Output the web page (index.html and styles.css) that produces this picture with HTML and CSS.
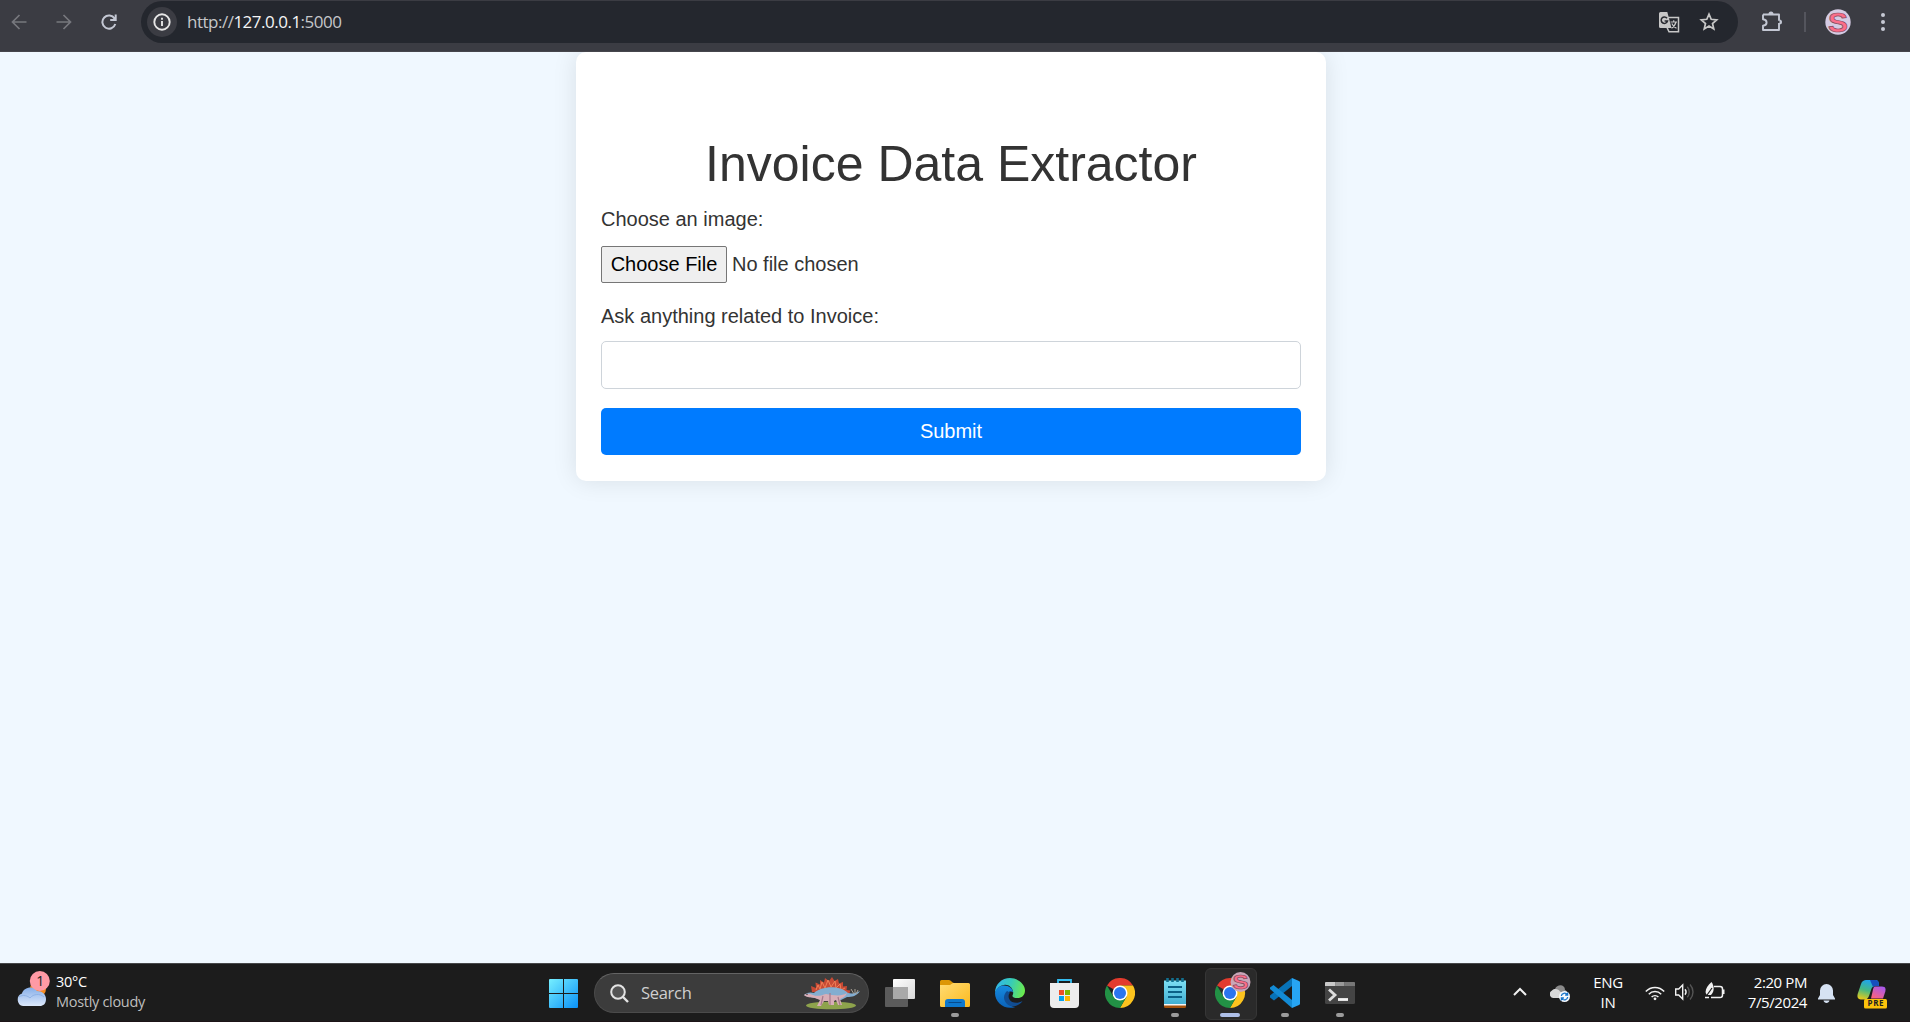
FILE: index.html
```html
<!DOCTYPE html>
<html lang="en">
<head>
<meta charset="utf-8">
<title>Invoice Data Extractor</title>
<link rel="stylesheet" href="styles.css">
</head>
<body>
<header class="toolbar">
  <div class="nav">
    <svg class="dim" width="16" height="16" viewBox="0 0 16 16"><path d="M15.5 8H1.5M8.5 1L1.5 8l7 7" /></svg>
    <svg class="dim fwd" width="16" height="16" viewBox="0 0 16 16"><path d="M.5 8h14M7.500 1l7 7-7 7" /></svg>
    <svg class="reload" width="16" height="16" viewBox="0 0 16 16"><path d="M13.600 4.600A6.600 6.600 0 1 0 14.300 10M14.700 .5v5.500H9.200"/></svg>
  </div>
  <div class="omnibox">
    <span class="site-info"><svg width="18" height="18" viewBox="0 0 18 18"><circle cx="9" cy="9" r="7.700"/><path d="M9 8v5M9 4.800v2"/></svg></span>
    <span class="url">http://<b>127.0.0.1</b>:5000</span>
    <svg class="translate" width="22" height="22" viewBox="0 0 22 22">
      <path d="M9 5.500h10.500v14.300H10L8 15.500" fill="none" stroke="#c7c7c7" stroke-width="1.500"/>
      <path d="M1.500 0h6.800L12.500 16h-11A1.500 1.500 0 0 1 0 14.500v-13A1.500 1.500 0 0 1 1.500 0z" fill="#c7c7c7"/>
      <path d="M8 6.300A3.200 3.200 0 1 0 8.500 9H5.600" fill="none" stroke="#282a30" stroke-width="1.500"/>
      <path d="M11.500 10h6.500M14.700 8.300V10M17 10c-.7 3-2.500 5-4.500 6.200M12.800 11.500c.8 2 2.300 3.500 4.700 4.700" fill="none" stroke="#c7c7c7" stroke-width="1.200"/>
    </svg>
    <svg class="star" width="20" height="20" viewBox="0 0 20 20"><path d="M10 2.200l2.200 5.100 5.500.5-4.200 3.700 1.300 5.500L10 14.100 5.200 17l1.300-5.500-4.200-3.700 5.500-.5z" fill="none" stroke="#c7c7c7" stroke-width="1.700"/></svg>
  </div>
  <svg class="puzzle" width="22" height="22" viewBox="0 0 22 22"><path d="M2 3.500h16v6.200M18 12v7H2v-4.200c4.800-.5 4.800-6.100 0-6.600V3.500" fill="none" stroke="#c3c7d3" stroke-width="1.900" stroke-linejoin="round"/><path d="M7.500 3a2.500 2.500 0 0 1 5 0zM18.500 8.500a2.500 2.500 0 0 1 0 5z" fill="#c3c7d3"/></svg>
  <span class="divider"></span>
  <svg class="avatar" width="26" height="26" viewBox="0 0 26 26"><circle cx="13" cy="13" r="12.700" fill="#d5cbe3"/><text x="13" y="22.500" text-anchor="middle" class="mono-s" textLength="20" lengthAdjust="spacingAndGlyphs">S</text></svg>
  <svg class="dots" width="6" height="20" viewBox="0 0 6 20"><circle cx="3" cy="3" r="2"/><circle cx="3" cy="10" r="2"/><circle cx="3" cy="17" r="2"/></svg>
</header>

<main class="page">
  <form class="card">
    <h1>Invoice Data Extractor</h1>
    <label class="label">Choose an image:</label>
    <div class="file"><button type="button" class="choose">Choose File</button><span>No file chosen</span></div>
    <label class="label">Ask anything related to Invoice:</label>
    <input class="question" type="text">
    <button type="button" class="submit">Submit</button>
  </form>
</main>

<footer class="taskbar">
  <div class="weather">
    <svg width="36" height="40" viewBox="0 0 36 40">
      <defs><linearGradient id="cloud" x1="0" y1="0" x2="0" y2="1"><stop offset="0" stop-color="#86aee8"/><stop offset="1" stop-color="#dce8fb"/></linearGradient></defs>
      <circle cx="22" cy="18" r="8" fill="#f58b1f"/>
      <path d="M7 35a6.500 6.500 0 0 1-1-12.500C7 17 17 13.500 21 20c5 0 9 3 9 8s-3 7-6 7z" fill="url(#cloud)"/>
      <path d="M3 26c4-3 9-1 11 1 3-4 10-5 14-1" fill="none" stroke="#8fb2e6" stroke-width="1"/>
      <circle cx="23.800" cy="10" r="10" fill="#ff9aa5"/><text x="24.300" y="15" text-anchor="middle" class="badge">1</text>
    </svg>
    <div class="two weather-text"><span>30°C</span><span class="muted">Mostly cloudy</span></div>
  </div>
  <svg class="start" width="29" height="29" viewBox="0 0 29 29">
    <defs><linearGradient id="win" x1="0" y1="0" x2="1" y2="1"><stop offset="0" stop-color="#76efff"/><stop offset="1" stop-color="#0a91f8"/></linearGradient></defs>
    <path fill="url(#win)" d="M1 0h13v14H0V1a1 1 0 0 1 1-1zM15 0h13a1 1 0 0 1 1 1v13H15zM0 15h14v14H1a1 1 0 0 1-1-1zM15 15h14v13a1 1 0 0 1-1 1H15z"/>
  </svg>
  <div class="search">
    <svg width="19" height="19" viewBox="0 0 19 19" fill="none" stroke="#e4e4e4" stroke-width="2"><circle cx="8" cy="8" r="6.800" fill="#555"/><path d="M13 13l5 5" stroke-width="2.400"/></svg>
    <span>Search</span>
    <svg class="dino" width="57" height="33" viewBox="0 0 57 33">
      <ellipse cx="28" cy="28.500" rx="25" ry="3.800" fill="#8ea34c"/>
      <path d="M9 15L8 9l5 2-.5-5.500 4.500 2L17 3l4 2.500L22 1l4 3 3-4 2.500 4L35 2l1 4.500L40 5l0 4.500 4-.5-.5 4 4 .5L46 17z" fill="#c84a35"/>
      <path d="M13 13l2-5 2 4 2-7 3 6 3-8 3 7 4-6 1 7 4-4 1 6 4-2" fill="none" stroke="#f08058"/>
      <path d="M1 18c3-3 7-3 10-2 6-6 24-9 34 0 5 1 8 0 12-2-3 5-8 6-13 6l-6 3H18l-6-2c-4-1-8-1-11-3z" fill="#83add0"/>
      <path d="M1 18c3-2 6-1 9 0 5 2 9 0 13-1 7 1 15 3 21-1-1 3-4 5-7 6l2 6h-4l-2-5-2 1v4h-5l-1-4h-4l-3 5h-4l3-6-5-2c-4-1-8 0-11-3z" fill="#d8aeb7"/>
      <path d="M20 19l-2 9M27 16v12M35 20l2 8" stroke="#a6798c" stroke-width="1.200"/><path d="M48 12l3 5M52 12v4M55 13l-2 4" stroke="#aaa396"/>
      <circle cx="4" cy="17.300" r=".7" fill="#222"/>
    </svg>
  </div>
  <nav class="apps">
    <div class="app"><svg width="30" height="30" viewBox="0 0 30 30">
      <defs><linearGradient id="tv" x1="0" y1="0" x2="1" y2="1"><stop offset="0" stop-color="#fff"/><stop offset="1" stop-color="#d9d9d9"/></linearGradient></defs>
      <rect y="9" width="23" height="20" rx="1" fill="#5b5b5b"/><rect x="8" y="1" width="22" height="20" rx="1" fill="url(#tv)"/><path d="M8 9h15v12H8z" fill="#a9a9a9"/></svg></div>
    <div class="app"><svg width="30" height="30" viewBox="0 0 30 30">
      <defs><linearGradient id="fold" x1="0" y1="0" x2="1" y2="1"><stop offset="0" stop-color="#ffdc74"/><stop offset="1" stop-color="#fcb91d"/></linearGradient></defs>
      <path d="M0 3.500A1.500 1.500 0 0 1 1.500 2H9c2 0 3 3 5 3v5H0z" fill="#dc9706"/><path d="M0 7h10l3-2h15.500A1.500 1.500 0 0 1 30 6.500v21a1.500 1.500 0 0 1-1.500 1.500h-27A1.500 1.500 0 0 1 0 27.500z" fill="url(#fold)"/><path d="M5 29v-5a3 3 0 0 1 3-3h14a3 3 0 0 1 3 3v5z" fill="#0d78ce"/><path d="M8.500 24.500h13" stroke="#064b8c"/></svg><i class="dot"></i></div>
    <div class="app"><svg width="30" height="30" viewBox="0 0 30 30">
      <defs><linearGradient id="e1" x1="0" y1=".3" x2="1" y2=".5"><stop offset="0" stop-color="#31b5ed"/><stop offset=".5" stop-color="#37cbb9"/><stop offset="1" stop-color="#6bea4d"/></linearGradient><linearGradient id="e2" x1="0" y1="0" x2="0" y2="1"><stop offset="0" stop-color="#168be0"/><stop offset="1" stop-color="#0b62b8"/></linearGradient></defs>
      <path d="M0 15C0 6 7 0 15 0s15 6 15 12.500c0 5-3.500 7.500-7.500 7.500-3.500 0-5.500-1-5-2.500.5-1 1-2 .5-4C17 9 13 6 9 7 5 7.500 2 10 0 15z" fill="url(#e1)"/>
      <path d="M0 15C1 10 5 7.500 9 7.500c5 0 9 3 9 7-1-1.500-4-1.500-5.500.5-4 5 1 14 8 14C10 32.500 0 25 0 15z" fill="url(#e2)"/>
      <path d="M12 13c-4 4-4 9 0 13s12 2.500 15.500-3c-5 3-11 2-13-1.500-1.500-2.500-1-5 .5-7z" fill="#114d92"/></svg></div>
    <div class="app"><svg width="30" height="30" viewBox="0 0 30 30">
      <path d="M8 7V2h13v5" fill="none" stroke="#35bdf0" stroke-width="1.800"/><path d="M0 5h29v21a4 4 0 0 1-4 4H4a4 4 0 0 1-4-4z" fill="#ededed"/><path d="M9 12h5v5H9z" fill="#ef4e26"/><path d="M15 12h5v5h-5z" fill="#7db700"/><path d="M9 18h5v5H9z" fill="#05a3ee"/><path d="M15 18h5v5h-5z" fill="#fdb700"/></svg></div>
    <div class="app"><svg width="30" height="30" viewBox="0 0 30 30">
      <g id="chrome"><path d="M15 15L2 7.500A15 15 0 0 1 28 7.500H15z" fill="#e33b2e"/><path d="M15 7.500h13A15 15 0 0 1 15 30l6.500-11.200z" fill="#fcc31e"/><path d="M2 7.500A15 15 0 0 0 15 30l6.500-11.200-13 0z" fill="#229145"/><circle cx="15" cy="15" r="7.500" fill="#fff"/><circle cx="15" cy="15" r="6" fill="#2a75ee"/></g></svg></div>
    <div class="app"><svg width="30" height="30" viewBox="0 0 30 30">
      <path d="M4 25h22v3.500A1.500 1.500 0 0 1 24.500 30h-19A1.500 1.500 0 0 1 4 28.500z" fill="#a5520d"/><path d="M4 24h22v3.500H4z" fill="#f5f5f5"/>
      <defs><linearGradient id="np" x1="0" y1="0" x2="0" y2="1"><stop offset="0" stop-color="#7ddff3"/><stop offset="1" stop-color="#41afd3"/></linearGradient></defs>
      <path d="M4 2.500h22V26H4z" fill="url(#np)"/><path d="M8 9h14M8 14h14M8 19h14" stroke="#0b6187" stroke-width="2"/><path d="M7.500 0v4M12.500 0v4M17.500 0v4M22.500 0v4" stroke="#12708f" stroke-width="2.600"/></svg><i class="dot"></i></div>
    <div class="app active"><svg class="over" width="36" height="36" viewBox="0 -6 36 36"><use href="#chrome"/><circle cx="25.500" cy="4" r="10" fill="#c9a6b8"/><text x="25.500" y="11.300" text-anchor="middle" class="mono-s small" textLength="16" lengthAdjust="spacingAndGlyphs">S</text></svg><i class="dot wide"></i></div>
    <div class="app"><svg width="30" height="30" viewBox="0 0 30 30">
      <path d="M22 0v8L4 22.500 0 19.500v-2z" fill="#0873b8"/><path d="M0 11v-1.500L3.500 7 22 22v8z" fill="#138bd5"/><path d="M22 0l7 3a2 2 0 0 1 1 2v20a2 2 0 0 1-1 2l-7 3z" fill="#27a5f3"/></svg><i class="dot"></i></div>
    <div class="app"><svg width="30" height="30" viewBox="0 0 30 30">
      <rect y="4" width="30" height="22" rx="1.500" fill="#444"/><path d="M0 8V5a1 1 0 0 1 1-1h9.500v4z" fill="#c9c9c9"/><path d="M10.500 4h9v4h-9z" fill="#999"/><path d="M19.500 4H29a1 1 0 0 1 1 1v3H19.500z" fill="#777"/><path d="M4 11.500l6 5.500-6 5.500" fill="none" stroke="#ddd" stroke-width="2.800"/><path d="M13 21.500h10" stroke="#f3f3f3" stroke-width="2.800"/></svg><i class="dot"></i></div>
  </nav>
  <div class="tray">
    <svg class="chev" width="14" height="9" viewBox="0 0 14 9"><path d="M1 8l6-6 6 6" fill="none" stroke="#f0f0f0" stroke-width="2"/></svg>
    <svg class="drive" width="20" height="20" viewBox="0 0 20 20"><path d="M5 5C7 0 15 0 15 6c3 1 3 6 1 8H9z" fill="#8b8b8b"/><path d="M3 14a4 4 0 0 1-1-7.500c3-3 7-1 8 1l6 3v3.500z" fill="#d8d8d8"/><circle cx="14.500" cy="12.500" r="5.500" fill="#f4f8fc"/><path d="M11.300 12a3.300 3.300 0 0 1 6-1.300M17.700 13a3.300 3.300 0 0 1-6 1.500M17.600 8.500v2.500h-2.500M11.400 16.500V14h2.500" fill="none" stroke="#1673c9" stroke-width="1.300"/></svg>
    <div class="two lang"><span>ENG</span><span>IN</span></div>
    <svg class="wifi" width="20" height="16" viewBox="0 0 20 16" fill="none" stroke="#f2f2f2" stroke-width="1.500"><path d="M.8 6.500a12.500 12.500 0 0 1 18.400 0M3.800 9.300a8.500 8.500 0 0 1 12.400 0M6.600 12a5 5 0 0 1 6.800 0"/><circle cx="10" cy="13.800" r="1.400" fill="#f2f2f2" stroke="none"/></svg>
    <svg class="vol" width="20" height="18" viewBox="0 0 20 18" fill="none" stroke="#f2f2f2" stroke-width="1.400"><path d="M.7 6h3l4-4v14l-4-4h-3z"/><path d="M10 6.300c1.300 1.600 1.300 3.800 0 5.400"/><path d="M12.300 3.800c2.600 3 2.600 7.400 0 10.400M15 1.500c4 4.500 4 10.500 0 15" stroke="#555"/></svg>
    <svg class="bat" width="20" height="18" viewBox="0 0 20 18"><path d="M9 4.500h6a2.500 2.500 0 0 1 2.500 2.500v6a2.500 2.500 0 0 1-2.500 2.500H6" fill="none" stroke="#f2f2f2" stroke-width="1.500"/><path d="M18 7.500h1.500v4.500H18z" fill="#f2f2f2"/><path d="M6.500 0c3 4 3 10-.5 13H2C-1 10 1 5 6.500 0z" fill="#f2f2f2"/><path d="M0 16L7 6" stroke="#1c1c1c" stroke-width="1.200"/><path d="M0 15.500h4" stroke="#f2f2f2" stroke-width="1.500"/></svg>
    <div class="two clock"><span>2:20 PM</span><span>7/5/2024</span></div>
    <svg class="bell" width="17" height="19" viewBox="0 0 17 19"><path d="M8.500 0a6.500 6.500 0 0 1 6.500 6.500V11l2 3.500v1H0v-1L2 11V6.500A6.500 6.500 0 0 1 8.500 0zM5.500 16.500h6c-.5 3.300-5.500 3.300-6 0z" fill="#d6e2f3"/></svg>
    <svg class="copilot" width="30" height="30" viewBox="0 0 30 30">
      <defs><linearGradient id="c1" x1=".5" y1="0" x2=".2" y2="1"><stop offset="0" stop-color="#1ea4f0"/><stop offset=".5" stop-color="#44b984"/><stop offset="1" stop-color="#eccb17"/></linearGradient><linearGradient id="c2" x1=".8" y1="0" x2=".2" y2="1"><stop offset="0" stop-color="#a558ef"/><stop offset="1" stop-color="#ff637a"/></linearGradient></defs>
      <path d="M9 1h10c2 0 3 2 3 6h-4c-2 0-3 1-4 4l-2 6c-1 3-3 3.500-5 3.500H4C0 20 0 17 1 14l3-9C5 2 7 1 9 1z" fill="url(#c1)"/><path d="M13 1h6c2 0 3 2 3 6h-4l-2 1z" fill="#174fbd"/><path d="M18 7.500h7c4 0 4 3 3 6l-2 6H14l2-9c.5-2 1-3 2-3z" fill="url(#c2)"/>
      <rect x="7" y="20" width="23" height="9.500" rx="1.500" fill="#fdc30b"/><text x="18.500" y="27.300" text-anchor="middle" class="pre" textLength="16">PRE</text></svg>
  </div>
</footer>
</body>
</html>
```
FILE: styles.css
```css
* { box-sizing: border-box; }
body {
  margin: 0;
  height: 1022px;
  display: flex;
  flex-direction: column;
  overflow: hidden;
  background: #f0f8ff;
  font-family: "Liberation Sans", Arial, sans-serif;
}
svg { display: block; flex: none; }

/* Browser toolbar */
.toolbar {
  position: relative;
  z-index: 1;
  flex: none;
  height: 52px;
  padding-top: 1px;
  display: flex;
  align-items: flex-start;
  background: #3b3c43;
  border-bottom: 1px solid #46464c;
}
.nav { width: 141px; height: 42px; display: flex; align-items: center; padding-left: 11px; }
.nav svg { fill: none; stroke: #c4c8d4; stroke-width: 2; }
.nav .dim { stroke: #77787e; stroke-width: 1.700; }
.nav .fwd { margin-left: 29px; }
.nav .reload { margin-left: 29px; }
.omnibox {
  width: 1597px;
  height: 42px;
  border-radius: 21px;
  background: #24272e;
  display: flex;
  align-items: center;
  padding: 0 19px 0 6px;
}
.site-info {
  width: 30px;
  height: 30px;
  border-radius: 50%;
  background: #3b3c43;
  display: flex;
  align-items: center;
  justify-content: center;
}
.site-info svg { fill: none; stroke: #e6e6e6; stroke-width: 1.900; }
.url {
  flex: 1;
  margin-left: 10px;
  font: 17px/24px "Open Sans", "Noto Sans", sans-serif;
  letter-spacing: -0.500px;
  color: #c5c6c9;
}
.url b { font-weight: 400; color: #f5f5f5; }
.translate { margin-right: 18px; position: relative; top: 1px; }
.puzzle { margin: 10px 0 0 23px; }
.divider { width: 2px; height: 20px; margin: 11px 0 0 21px; background: #54555d; }
.avatar { margin: 8px 0 0 19px; }
.dots { margin: 11px 0 0 29px; fill: #c6c9d4; }
.mono-s { font: bold 28px "Liberation Sans", Arial, sans-serif; fill: #fb6e8a; stroke: #84475b; stroke-width: .7px; }
.mono-s.small { font-size: 20px; }

/* Page */
.page { flex: 1; display: flex; justify-content: center; align-items: flex-start; padding-right: 8px; }
.card {
  width: 750px;
  height: 429px;
  padding: 82px 25px 0;
  background: #fff;
  border-radius: 10px;
  box-shadow: 0 0 25px rgba(0, 0, 0, .1);
  display: flex;
  flex-direction: column;
  color: #333;
  font-size: 20px;
  line-height: 30px;
}
.card h1 { margin: 0 0 10px; text-align: center; font-size: 50px; font-weight: 400; line-height: 60px; }
.label { display: block; margin-bottom: 10px; }
.file { display: flex; align-items: center; gap: 5px; height: 38px; margin: 2px 0 17px; }
.choose {
  width: 126px;
  height: 37px;
  padding: 0;
  margin-top: -2px;
  border: 1px solid #767676;
  border-radius: 2px;
  background: #efefef;
  font: 20px "Liberation Sans", Arial, sans-serif;
  color: #000;
}
.file span { margin-top: -3px; }
.question { height: 48px; flex: none; border: 1px solid #ced4da; border-radius: 5px; background: #fff; padding: 8px 15px; font: inherit; }
.submit { height: 47px; flex: none; margin-top: 19px; border: 0; border-radius: 5px; background: #007bff; color: #fff; font: 20px "Liberation Sans", Arial, sans-serif; }

/* Taskbar */
.taskbar {
  position: relative;
  flex: none;
  height: 59px;
  display: flex;
  align-items: flex-start;
  background: #1c1c1c;
  border-top: 1px solid #47484a;
  border-bottom: 1px solid #1c1417;
  font: 15px/20px "Open Sans", "Noto Sans", sans-serif;
  color: #fff;
}
.two { display: flex; flex-direction: column; margin-top: 8px; }
.weather { width: 549px; padding-left: 16px; display: flex; }
.weather svg { margin-top: 7px; }
.weather-text { margin-left: 4px; letter-spacing: -0.300px; font-size: 14.500px; }
.muted { color: #bfbfbf; }
.badge { font: 14px "Open Sans", sans-serif; fill: #222; }
.start { margin-top: 15px; }
.search {
  width: 275px;
  height: 40px;
  margin: 9px 3px 0 16px;
  padding: 0 8px 0 15px;
  border: 1px solid #4b4b4b;
  border-top-color: #646464;
  border-radius: 20px;
  background: #3c3c3c;
  display: flex;
  align-items: center;
}
.search span { flex: 1; margin-left: 12px; font-size: 16.500px; color: #cfcfcf; letter-spacing: -0.300px; }
.apps { display: flex; height: 58px; }
.app { position: relative; width: 55px; padding: 14px 0 0 13px; }
.active::before { content: ""; position: absolute; left: 3px; top: 4px; width: 50px; height: 50px; border: 1px solid #363636; border-radius: 6px; background: #2a2a2a; }
.app svg { position: relative; }
.app .over { margin-top: -6px; }
.dot { position: absolute; left: 24px; top: 49px; width: 8px; height: 4px; border-radius: 2px; background: #9b9b9b; }
.dot.wide { left: 18px; width: 20px; background: #aebfe8; }
.tray { flex: 1; display: flex; align-items: flex-start; margin-left: 146px; }
.chev { margin-top: 23px; }
.drive { margin: 20px 0 0 23px; }
.lang { width: 40px; margin-left: 18px; text-align: center; letter-spacing: -0.300px; }
.wifi { margin: 21px 0 0 17px; }
.vol { margin: 19px 0 0 10px; }
.bat { margin: 18px 0 0 10px; }
.clock { width: 72px; margin-left: 10px; text-align: right; letter-spacing: -0.400px; white-space: nowrap; }
.bell { margin: 20px 0 0 11px; }
.copilot { margin: 15px 0 0 22px; }
.pre { font: bold 8px "Open Sans", sans-serif; fill: #222; }
```
